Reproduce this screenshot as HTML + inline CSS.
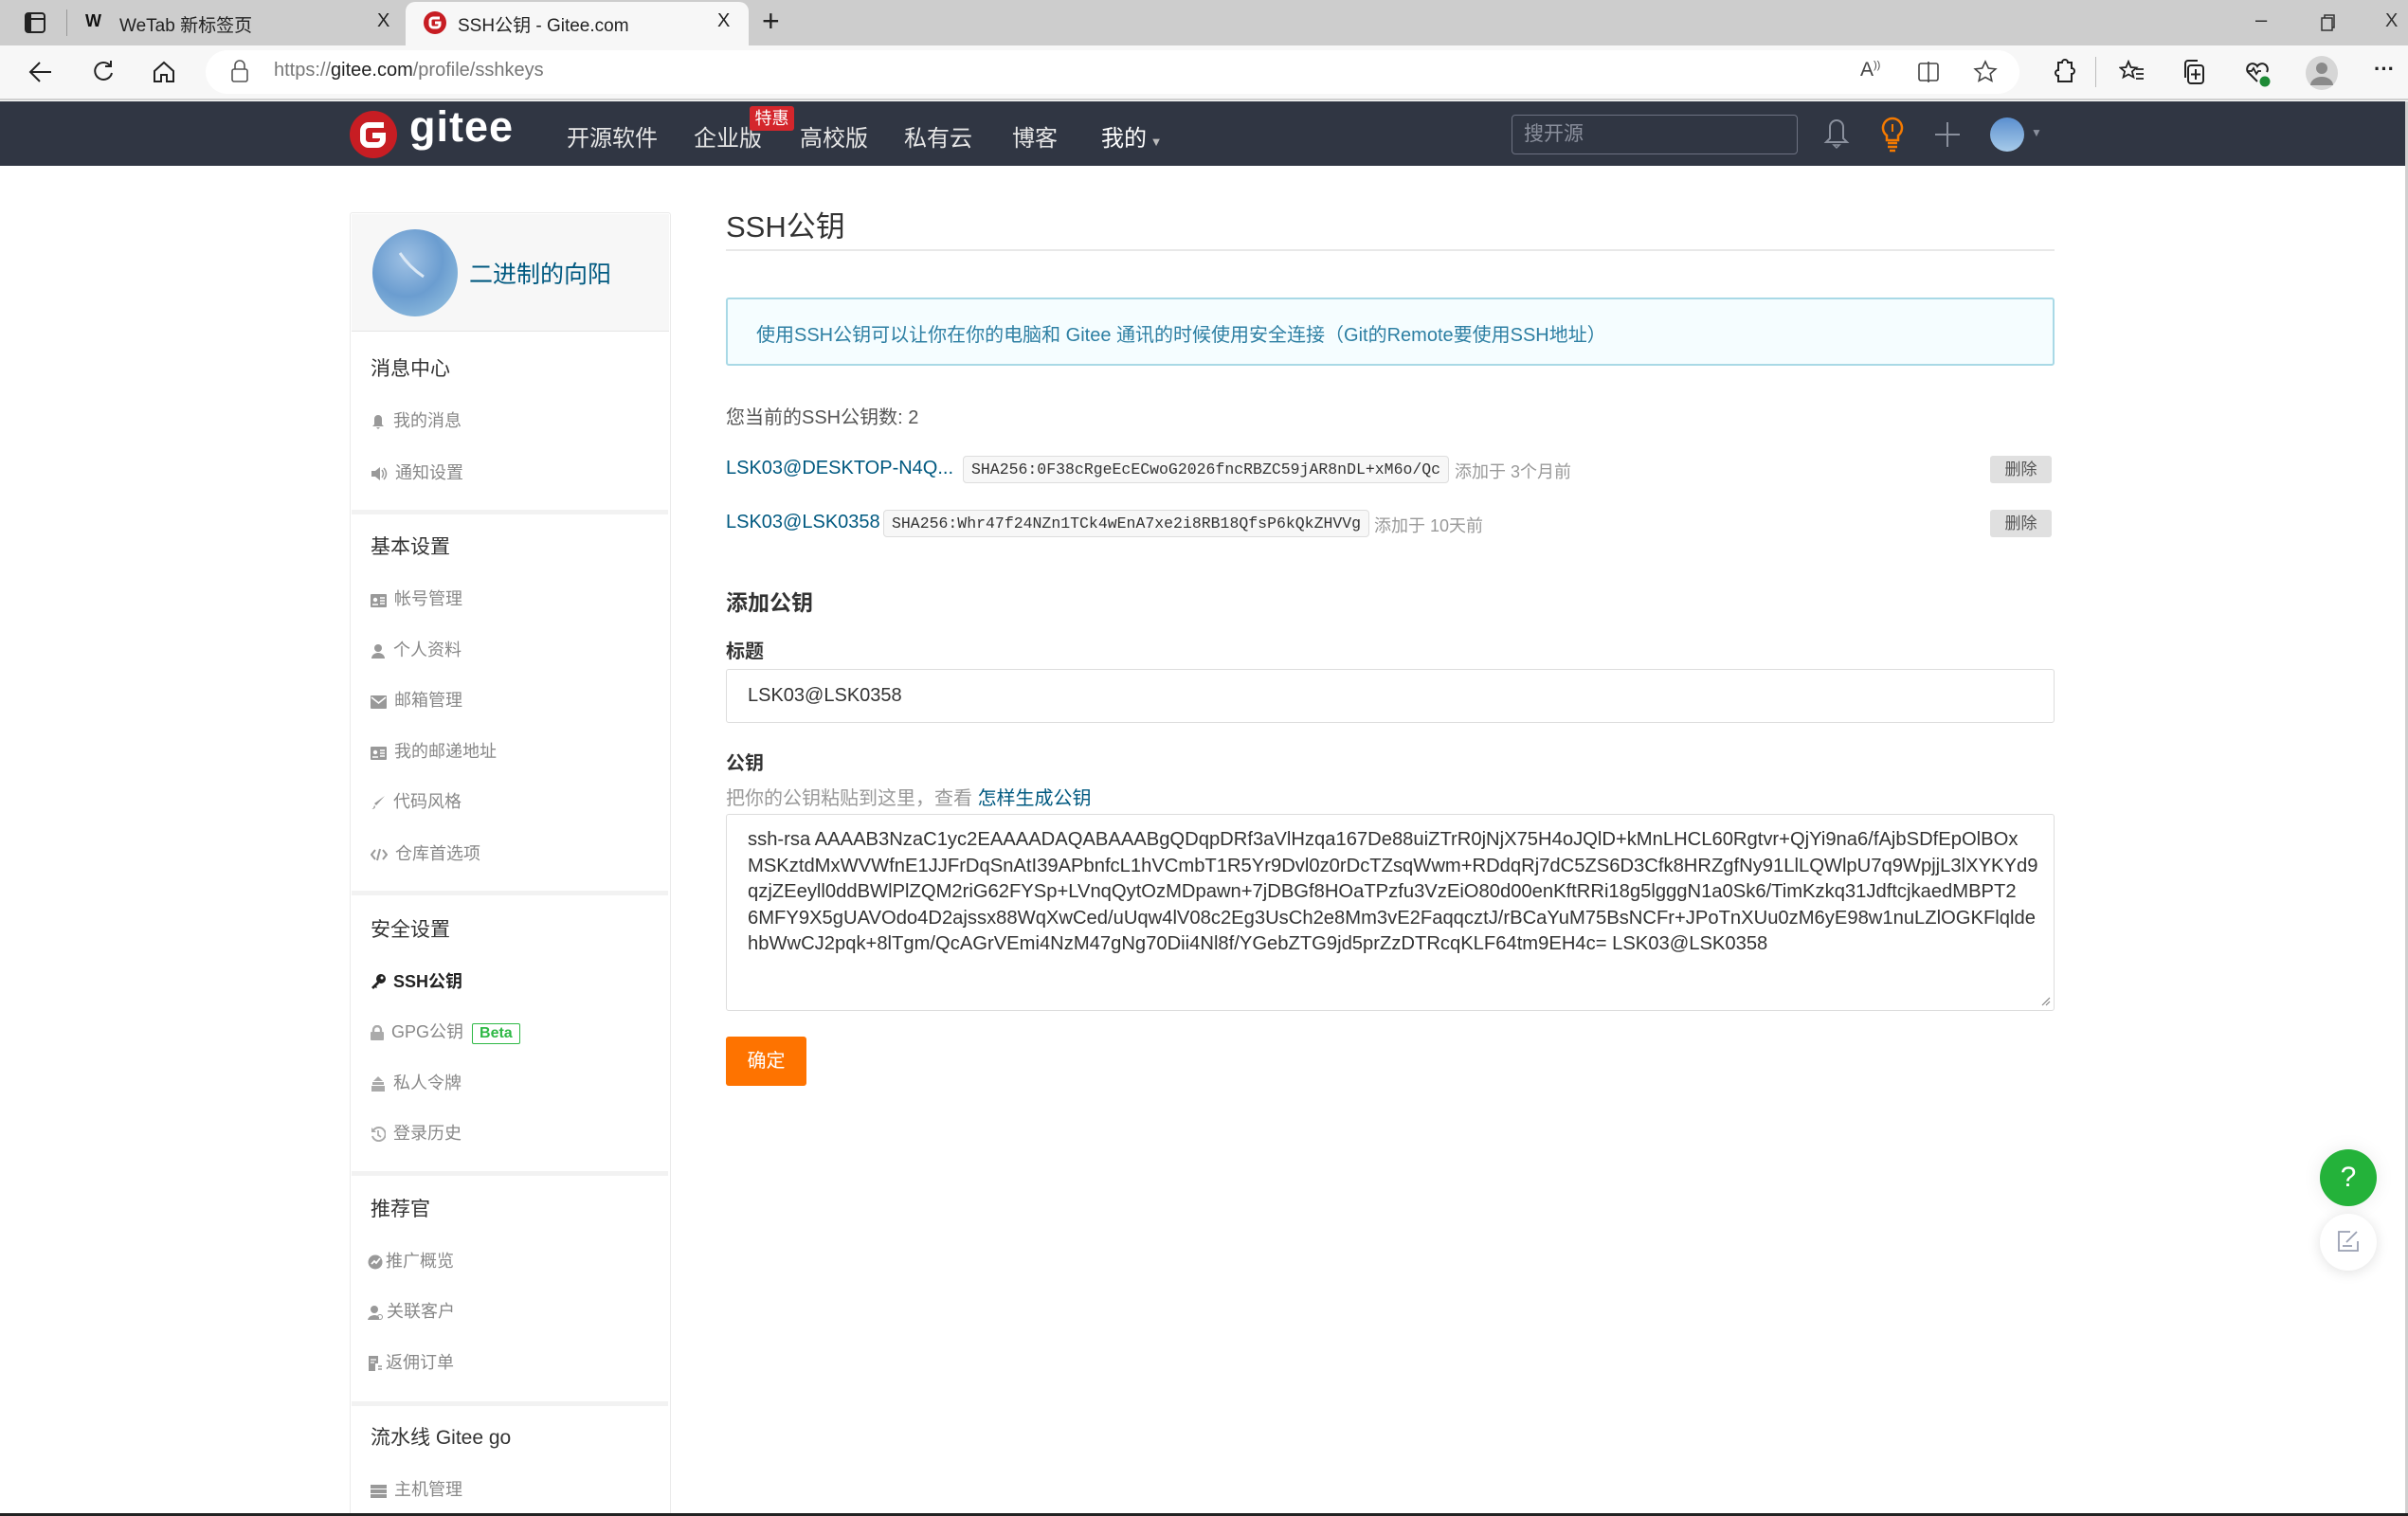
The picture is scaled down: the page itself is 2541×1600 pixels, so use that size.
<!DOCTYPE html>
<html><head><meta charset="utf-8">
<style>
*{margin:0;padding:0;box-sizing:border-box}
body{width:2541px;height:1600px;overflow:hidden;background:#fff;font-family:"Liberation Sans","Noto Sans CJK SC",sans-serif;position:relative;color:#333}
.a{position:absolute;white-space:nowrap}
.sb-h{font-size:21px;color:#333;left:391px}
.sb-i{font-size:18px;color:#888;left:391px}
.sb-i svg{vertical-align:-3px;margin-right:8px}
.div{position:absolute;left:371px;width:334px;height:5px;background:#f2f2f2}
.code{position:absolute;height:29px;border:1px solid #ddd;border-radius:4px;background:#f7f7f7;font-family:"Liberation Mono",monospace;font-size:16.5px;color:#333;line-height:27px;padding:0 8px}
.del{position:absolute;left:2100px;width:65px;height:29px;background:#e0e0e0;border-radius:3px;font-size:17px;color:#555;text-align:center;line-height:29px}
.ta div{white-space:nowrap;height:27.6px}
</style></head><body>
<!-- tab bar -->
<div class="a" style="left:0;top:0;width:2541px;height:48px;background:#cdcdcd"></div>
<div class="a" style="left:428px;top:2px;width:362px;height:48px;background:#f7f7f7;border-radius:10px 10px 0 0"></div>
<svg class="a" style="left:26px;top:13px" width="22" height="22"><rect x="1" y="1" width="20" height="20" rx="3" fill="none" stroke="#222" stroke-width="2"/><line x1="1" y1="7" x2="21" y2="7" stroke="#222" stroke-width="2"/><rect x="1" y="1" width="6" height="20" fill="#222"/></svg>
<div class="a" style="left:70px;top:10px;width:1px;height:28px;background:#999"></div>
<div class="a" style="left:90px;top:12px;font-size:18px;font-weight:bold;color:#111">W</div>
<div class="a" style="left:126px;top:12px;font-size:19px;color:#222">WeTab 新标签页</div>
<div class="a" style="left:398px;top:11px;font-size:20px;color:#222">X</div>
<svg class="a" style="left:447px;top:12px" width="24" height="24"><circle cx="12" cy="12" r="12" fill="#c71d23"/><path d="M17 7H10a3 3 0 0 0-3 3v4a3 3 0 0 0 3 3h4a3 3 0 0 0 3-3v-2h-5" fill="none" stroke="#fff" stroke-width="3"/></svg>
<div class="a" style="left:483px;top:12px;font-size:19px;color:#222">SSH公钥 - Gitee.com</div>
<div class="a" style="left:757px;top:11px;font-size:20px;color:#222">X</div>
<div class="a" style="left:804px;top:4px;font-size:32px;color:#222;font-weight:300">+</div>
<div class="a" style="left:2380px;top:8px;font-size:22px;color:#333">–</div>
<svg class="a" style="left:2449px;top:15px" width="16" height="18"><rect x="1" y="4" width="11" height="13" fill="none" stroke="#333" stroke-width="1.5"/><path d="M4 4V1h10v13h-2" fill="none" stroke="#333" stroke-width="1.5"/></svg>
<div class="a" style="left:2517px;top:11px;font-size:20px;color:#333">X</div>
<!-- address bar -->
<div class="a" style="left:0;top:48px;width:2541px;height:58px;background:#f7f7f7;border-bottom:2px solid #cfcfcf"></div>
<div class="a" style="left:217px;top:53px;width:1914px;height:46px;background:#fff;border-radius:23px"></div>
<svg class="a" style="left:30px;top:64px" width="26" height="24"><path d="M24 12H3M12 2L2 12l10 10" fill="none" stroke="#222" stroke-width="2"/></svg>
<svg class="a" style="left:96px;top:63px" width="26" height="26"><path d="M20 6A9 9 0 1 0 22 14" fill="none" stroke="#222" stroke-width="2"/><path d="M21 1v6h-6" fill="none" stroke="#222" stroke-width="2"/></svg>
<svg class="a" style="left:160px;top:63px" width="26" height="26"><path d="M3 12L13 3l10 9v11h-7v-7h-6v7H3z" fill="none" stroke="#222" stroke-width="2"/></svg>
<svg class="a" style="left:244px;top:63px" width="18" height="24"><rect x="1" y="10" width="16" height="13" rx="2" fill="none" stroke="#555" stroke-width="1.6"/><path d="M4 10V6a5 5 0 0 1 10 0v4" fill="none" stroke="#555" stroke-width="1.6"/></svg>
<div class="a" style="left:289px;top:63px;font-size:20px;color:#777">https://<span style="color:#222">gitee.com</span>/profile/sshkeys</div>
<div class="a" style="left:1963px;top:62px;font-size:21px;color:#444">A<sup style="font-size:11px">))</sup></div>
<svg class="a" style="left:2023px;top:64px" width="24" height="24"><rect x="2" y="3" width="20" height="18" rx="2" fill="none" stroke="#444" stroke-width="1.6"/><line x1="12" y1="1" x2="12" y2="23" stroke="#444" stroke-width="1.6"/></svg>
<svg class="a" style="left:2082px;top:63px" width="26" height="26"><path d="M13 2l3.3 7 7.5.8-5.6 5 1.6 7.5L13 18.5 6.2 22.3l1.6-7.5-5.6-5 7.5-.8z" fill="none" stroke="#444" stroke-width="1.6"/></svg>
<svg class="a" style="left:2164px;top:62px" width="26" height="28"><path d="M8 4h4a3 3 0 0 1 6 0h4v6a3 3 0 0 1 0 6v8H8v-6a3 3 0 0 1 0-6z" fill="none" stroke="#222" stroke-width="2"/></svg>
<div class="a" style="left:2211px;top:60px;width:1px;height:32px;background:#bbb"></div>
<svg class="a" style="left:2236px;top:63px" width="28" height="26"><path d="M10 2l2.5 6 6 .5-4.6 4 1.5 6L10 15.5 4.6 18.5l1.5-6L1.5 8.5l6-.5z" fill="none" stroke="#222" stroke-width="1.8"/><path d="M18 10h8M18 15h8M18 20h8" stroke="#222" stroke-width="1.8"/></svg>
<svg class="a" style="left:2303px;top:62px" width="26" height="28"><rect x="6" y="7" width="16" height="19" rx="3" fill="none" stroke="#222" stroke-width="2"/><path d="M3 20V5a3 3 0 0 1 3-3h10" fill="none" stroke="#222" stroke-width="2"/><path d="M14 11v11M9 16.5h10" stroke="#222" stroke-width="2"/></svg>
<svg class="a" style="left:2368px;top:62px" width="28" height="30"><path d="M14 24L4 14a5.5 5.5 0 0 1 10-6 5.5 5.5 0 0 1 10 6" fill="none" stroke="#222" stroke-width="2"/><path d="M3 13h5l2-3 3 6 2-3h3" fill="none" stroke="#222" stroke-width="1.8"/><circle cx="22" cy="24" r="5.5" fill="#1e8a36"/></svg>
<svg class="a" style="left:2432px;top:59px" width="36" height="36"><ellipse cx="18" cy="18" rx="17" ry="18" fill="#d6d6d6"/><circle cx="18" cy="13" r="6" fill="#8a8a8a"/><path d="M6 31a12 9 0 0 1 24 0z" fill="#8a8a8a"/></svg>
<div class="a" style="left:2505px;top:60px;font-size:22px;color:#222;font-weight:bold">···</div>
<!-- gitee nav -->
<div class="a" style="left:0;top:107px;width:2541px;height:68px;background:#303643"></div>
<svg class="a" style="left:368px;top:116px" width="52" height="52"><circle cx="26" cy="26" r="25" fill="#c71d23"/><path d="M37 16H21a6 6 0 0 0-6 6v9a6 6 0 0 0 6 6h9a6 6 0 0 0 6-6v-4H25" fill="none" stroke="#fff" stroke-width="6"/></svg>
<div class="a" style="left:432px;top:108px;font-size:45px;font-weight:bold;color:#fff;letter-spacing:1px">gitee</div>
<div class="a" style="left:598px;top:126px;font-size:24px;color:#e6e6e6">开源软件</div>
<div class="a" style="left:732px;top:126px;font-size:24px;color:#e6e6e6">企业版</div>
<div class="a" style="left:791px;top:112px;width:47px;height:26px;background:#d4262c;border-radius:3px;font-size:18px;color:#fff;text-align:center;line-height:26px">特惠</div>
<div class="a" style="left:844px;top:126px;font-size:24px;color:#e6e6e6">高校版</div>
<div class="a" style="left:954px;top:126px;font-size:24px;color:#e6e6e6">私有云</div>
<div class="a" style="left:1068px;top:126px;font-size:24px;color:#e6e6e6">博客</div>
<div class="a" style="left:1162px;top:126px;font-size:24px;color:#fff">我的<span style="font-size:13px;color:#bbb"> ▼</span></div>
<div class="a" style="left:1595px;top:121px;width:302px;height:42px;border:1.5px solid #6d7282;border-radius:4px;font-size:21px;color:#8a8f9c;line-height:39px;padding-left:12px">搜开源</div>
<svg class="a" style="left:1924px;top:124px" width="28" height="36"><path d="M14 3a7 7 0 0 0-7 7v12l-4 4h22l-4-4V10a7 7 0 0 0-7-7z" fill="none" stroke="#8a909d" stroke-width="2"/><path d="M11 29h6l-3 3z" fill="none" stroke="#8a909d" stroke-width="1.5"/></svg>
<svg class="a" style="left:1983px;top:123px" width="28" height="38"><path d="M14 2a10 10 0 0 0-6 18v5h12v-5a10 10 0 0 0-6-18z" fill="none" stroke="#f57a00" stroke-width="2.5"/><path d="M14 8v8" stroke="#f57a00" stroke-width="2"/><path d="M9 28h10M9 32h10M11 36h6" stroke="#f57a00" stroke-width="2.5"/></svg>
<svg class="a" style="left:2040px;top:127px" width="30" height="30"><path d="M15 2v26M2 15h26" stroke="#8a909d" stroke-width="2"/></svg>
<svg class="a" style="left:2100px;top:124px" width="40" height="40"><defs><linearGradient id="g1" x1="0" y1="0" x2="0" y2="1"><stop offset="0" stop-color="#5b8fcf"/><stop offset="1" stop-color="#a7cbe9"/></linearGradient></defs><ellipse cx="18" cy="18" rx="18" ry="18" fill="url(#g1)"/></svg>
<div class="a" style="left:2143px;top:133px;font-size:12px;color:#8a909d">▼</div>
<!-- sidebar -->
<div class="a" style="left:369px;top:224px;width:339px;height:1376px;border:1.5px solid #eaeaea;border-radius:3px"></div>
<div class="a" style="left:371px;top:226px;width:335px;height:124px;background:#f7f7f7;border-bottom:1.5px solid #e5e5e5"></div>
<svg class="a" style="left:392px;top:242px" width="92" height="92"><defs><radialGradient id="g2" cx="0.4" cy="0.35" r="0.7"><stop offset="0" stop-color="#9fc1e4"/><stop offset="0.6" stop-color="#6b9dd0"/><stop offset="1" stop-color="#8ab8dc"/></radialGradient></defs><ellipse cx="46" cy="46" rx="45" ry="46" fill="url(#g2)"/><path d="M30 25q10 15 25 25" stroke="#dbe8f5" stroke-width="3" fill="none"/></svg>
<div class="a" style="left:495px;top:270px;font-size:25px;color:#005980">二进制的向阳</div>
<div class="a sb-h" style="top:373px">消息中心</div>
<div class="a sb-i" style="top:430px"><svg width="16" height="16"><path d="M8 1a4 4 0 0 0-4 4v6l-2 2h12l-2-2V5a4 4 0 0 0-4-4zM6 14h4l-2 2z" fill="#999"/></svg>我的消息</div>
<div class="a sb-i" style="top:485px"><svg width="18" height="16"><path d="M1 5h4l5-4v14l-5-4H1z" fill="#999"/><path d="M12 4q3 4 0 8M14 2q5 6 0 12" stroke="#999" fill="none" stroke-width="1.5"/></svg>通知设置</div>
<div class="div" style="top:538px"></div>
<div class="a sb-h" style="top:561px">基本设置</div>
<div class="a sb-i" style="top:618px"><svg width="17" height="14"><rect x="0" y="0" width="17" height="14" rx="1" fill="#999"/><circle cx="5" cy="6" r="2.2" fill="#fff"/><path d="M10 4h5M10 7h5M10 10h5M2 11h6" stroke="#fff" stroke-width="1.4"/></svg>帐号管理</div>
<div class="a sb-i" style="top:672px"><svg width="16" height="16"><circle cx="8" cy="5" r="4" fill="#999"/><path d="M1 16a7 6 0 0 1 14 0z" fill="#999"/></svg>个人资料</div>
<div class="a sb-i" style="top:725px"><svg width="17" height="14"><rect width="17" height="14" rx="1" fill="#999"/><path d="M1 2l7.5 6L16 2" stroke="#fff" stroke-width="1.6" fill="none"/></svg>邮箱管理</div>
<div class="a sb-i" style="top:779px"><svg width="17" height="14"><rect x="0" y="0" width="17" height="14" rx="1" fill="#999"/><circle cx="5" cy="6" r="2.2" fill="#fff"/><path d="M10 4h5M10 7h5M10 10h5M2 11h6" stroke="#fff" stroke-width="1.4"/></svg>我的邮递地址</div>
<div class="a sb-i" style="top:832px"><svg width="16" height="16"><path d="M15 1L6 11l-2-2z" fill="#999"/><path d="M4 11q-1 4-3 4 4 0 4-3z" fill="#999"/></svg>代码风格</div>
<div class="a sb-i" style="top:887px"><svg width="18" height="16"><path d="M5 3L1 8l4 5M13 3l4 5-4 5M10 2l-3 12" stroke="#999" stroke-width="2" fill="none"/></svg>仓库首选项</div>
<div class="div" style="top:940px"></div>
<div class="a sb-h" style="top:965px">安全设置</div>
<div class="a" style="left:391px;top:1022px;font-size:18px;color:#222;font-weight:bold"><svg width="16" height="16" style="vertical-align:-2px;margin-right:8px"><circle cx="11" cy="5" r="5" fill="#222"/><path d="M8 7L1 14l2 2 2-2 1 1 1-1-1-1 3-3z" fill="#222"/><circle cx="12" cy="4" r="1.5" fill="#fff"/></svg>SSH公钥</div>
<div class="a sb-i" style="top:1075px"><svg width="14" height="16"><rect x="0" y="7" width="14" height="9" rx="1" fill="#aaa"/><path d="M3 7V5a4 4 0 0 1 8 0v2" stroke="#aaa" stroke-width="2.4" fill="none"/></svg>GPG公钥 <span style="display:inline-block;border:1.5px solid #2eb845;color:#2eb845;font-weight:bold;font-size:16px;padding:0 7px;line-height:20px;border-radius:2px;margin-left:4px">Beta</span></div>
<div class="a sb-i" style="top:1129px"><svg width="16" height="16"><path d="M8 0L3 5h10zM2 6h12v3H2zM1 10h14v6H1z" fill="#aaa"/></svg>私人令牌</div>
<div class="a sb-i" style="top:1182px"><svg width="16" height="16"><path d="M3 4a7 7 0 1 1-1 6" stroke="#aaa" stroke-width="2" fill="none"/><path d="M1 1v5h5z" fill="#aaa"/><path d="M8 4v5l3 2" stroke="#aaa" stroke-width="1.8" fill="none"/></svg>登录历史</div>
<div class="div" style="top:1236px"></div>
<div class="a sb-h" style="top:1260px">推荐官</div>
<div class="a sb-i" style="top:1317px;left:388px"><svg width="16" height="16" style="margin-right:3px"><circle cx="8" cy="8" r="7.5" fill="#999"/><path d="M4 10l3-3 2 2 4-5" stroke="#fff" stroke-width="1.8" fill="none"/></svg>推广概览</div>
<div class="a sb-i" style="top:1370px;left:388px"><svg width="17" height="16" style="margin-right:3px"><circle cx="7" cy="5" r="4" fill="#999"/><path d="M0 16a7 6 0 0 1 12-3v3z" fill="#999"/><circle cx="13" cy="13" r="2.5" stroke="#999" fill="none"/></svg>关联客户</div>
<div class="a sb-i" style="top:1424px;left:388px"><svg width="16" height="16" style="margin-right:3px"><path d="M1 0h10v8H8v8H1z" fill="#999"/><path d="M3 4h6M3 7h4" stroke="#fff" stroke-width="1.3"/><path d="M11 11h4M11 14h4" stroke="#999" stroke-width="1.5"/></svg>返佣订单</div>
<div class="div" style="top:1479px"></div>
<div class="a sb-h" style="top:1501px">流水线 Gitee go</div>
<div class="a sb-i" style="top:1558px"><svg width="17" height="14"><rect y="0" width="17" height="4" fill="#999"/><rect y="5" width="17" height="4" fill="#999"/><rect y="10" width="17" height="4" fill="#999"/></svg>主机管理</div>
<!-- main -->
<div class="a" style="left:766px;top:214px;font-size:31px;color:#333">SSH公钥</div>
<div class="a" style="left:766px;top:263px;width:1402px;height:2px;background:#e8e8e8"></div>
<div class="a" style="left:766px;top:314px;width:1402px;height:72px;background:#f5fdff;border:2px solid #a9d9e6;border-radius:3px"></div>
<div class="a" style="left:798px;top:337px;font-size:20px;color:#2d7fa3">使用SSH公钥可以让你在你的电脑和 Gitee 通讯的时候使用安全连接（Git的Remote要使用SSH地址）</div>
<div class="a" style="left:766px;top:424px;font-size:20px;color:#555">您当前的SSH公钥数: 2</div>
<div class="a" style="left:766px;top:483px;font-size:20px;color:#005980">LSK03@DESKTOP-N4Q...</div>
<div class="code" style="left:1016px;top:481px">SHA256:0F38cRgeEcECwoG2026fncRBZC59jAR8nDL+xM6o/Qc</div>
<div class="a" style="left:1535px;top:484px;font-size:18px;color:#999">添加于 3个月前</div>
<div class="del" style="top:481px">删除</div>
<div class="a" style="left:766px;top:540px;font-size:20px;color:#005980">LSK03@LSK0358</div>
<div class="code" style="left:932px;top:538px">SHA256:Whr47f24NZn1TCk4wEnA7xe2i8RB18QfsP6kQkZHVVg</div>
<div class="a" style="left:1450px;top:541px;font-size:18px;color:#999">添加于 10天前</div>
<div class="del" style="top:538px">删除</div>
<div class="a" style="left:766px;top:617px;font-size:23px;font-weight:bold;color:#333">添加公钥</div>
<div class="a" style="left:766px;top:671px;font-size:20px;font-weight:bold;color:#333">标题</div>
<div class="a" style="left:766px;top:706px;width:1402px;height:57px;border:1.5px solid #ddd;border-radius:3px;font-size:20px;color:#333;line-height:54px;padding-left:22px">LSK03@LSK0358</div>
<div class="a" style="left:766px;top:789px;font-size:20px;font-weight:bold;color:#333">公钥</div>
<div class="a" style="left:766px;top:826px;font-size:20px;color:#999">把你的公钥粘贴到这里，查看 <span style="color:#005980">怎样生成公钥</span></div>
<div class="a ta" style="left:766px;top:859px;width:1402px;height:208px;border:1.5px solid #ddd;border-radius:3px;font-size:20.2px;color:#333;padding:13px 0 0 22px;line-height:27.6px;overflow:hidden">
<div>ssh-rsa AAAAB3NzaC1yc2EAAAADAQABAAABgQDqpDRf3aVlHzqa167De88uiZTrR0jNjX75H4oJQlD+kMnLHCL60Rgtvr+QjYi9na6/fAjbSDfEpOlBOx</div>
<div>MSKztdMxWVWfnE1JJFrDqSnAtI39APbnfcL1hVCmbT1R5Yr9Dvl0z0rDcTZsqWwm+RDdqRj7dC5ZS6D3Cfk8HRZgfNy91LlLQWlpU7q9WpjjL3lXYKYd9</div>
<div>qzjZEeyll0ddBWlPlZQM2riG62FYSp+LVnqQytOzMDpawn+7jDBGf8HOaTPzfu3VzEiO80d00enKftRRi18g5lgggN1a0Sk6/TimKzkq31JdftcjkaedMBPT2</div>
<div>6MFY9X5gUAVOdo4D2ajssx88WqXwCed/uUqw4lV08c2Eg3UsCh2e8Mm3vE2FaqqcztJ/rBCaYuM75BsNCFr+JPoTnXUu0zM6yE98w1nuLZlOGKFlqlde</div>
<div>hbWwCJ2pqk+8lTgm/QcAGrVEmi4NzM47gNg70Dii4Nl8f/YGebZTG9jd5prZzDTRcqKLF64tm9EH4c= LSK03@LSK0358</div>
</div>
<svg class="a" style="left:2154px;top:1052px" width="10" height="10"><path d="M9 1L1 9M9 5L5 9" stroke="#888" stroke-width="1.2"/></svg>
<div class="a" style="left:766px;top:1094px;width:85px;height:52px;background:#fe7300;border-radius:3px;color:#fff;font-size:20px;text-align:center;line-height:52px">确定</div>
<!-- floating -->
<div class="a" style="left:2448px;top:1213px;width:60px;height:60px;border-radius:50%;background:#24b23a;box-shadow:0 0 20px rgba(0,0,0,.08);color:#fff;font-size:30px;text-align:center;line-height:60px">?</div>
<div class="a" style="left:2448px;top:1281px;width:60px;height:60px;border-radius:50%;background:#fff;box-shadow:0 2px 14px rgba(0,0,0,.12)"></div>
<svg class="a" style="left:2466px;top:1298px" width="24" height="24"><path d="M14 2H2v20h20V12" fill="none" stroke="#9aa0b3" stroke-width="1.8"/><path d="M10 13L21 2" stroke="#9aa0b3" stroke-width="1.8"/><path d="M6 17h10" stroke="#9aa0b3" stroke-width="1.8"/></svg>
<div class="a" style="left:2538px;top:107px;width:3px;height:1493px;background:#d0d0d0"></div>
<div class="a" style="left:0;top:1597px;width:2541px;height:3px;background:#222"></div>
</body></html>
